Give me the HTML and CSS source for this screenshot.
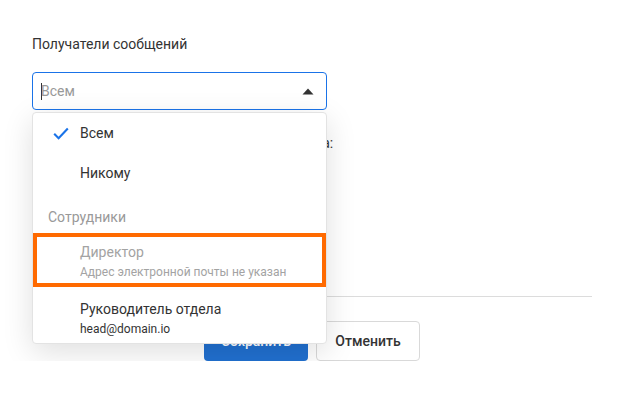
FILE: index.html
```html
<!DOCTYPE html>
<html lang="ru">
<head>
<meta charset="utf-8">
<title>Получатели сообщений</title>
<link rel="stylesheet" href="styles.css">
</head>
<body>
<div class="page">
  <div class="field-label">Получатели сообщений</div>
  <div class="select">
    <div class="select-input">
      <span class="caret"></span><span class="placeholder">Всем</span>
      <svg class="arrow" width="12" height="7" viewBox="0 0 12 7"><polygon points="0.5,6.5 6,0.5 11.5,6.5" fill="#333"/></svg>
    </div>
    <div class="dropdown">
      <div class="option selected">
        <svg class="check" width="16" height="13" viewBox="0 0 16 13"><polyline points="1.2,6.8 5.6,11.2 14.8,1.6" fill="none" stroke="#1a73e8" stroke-width="2.1"/></svg>
        <span class="option-title">Всем</span>
      </div>
      <div class="option"><span class="option-title">Никому</span></div>
      <div class="group">Сотрудники</div>
      <div class="option double disabled highlighted">
        <span class="option-title">Директор</span>
        <span class="option-sub">Адрес электронной почты не указан</span>
      </div>
      <div class="option double last">
        <span class="option-title">Руководитель отдела</span>
        <span class="option-sub">head@domain.io</span>
      </div>
    </div>
  </div>
  <div class="field-label second">Отправлять копии сообщений ещё на адреса:</div>
  <div class="divider"></div>
  <div class="actions">
    <button class="btn primary">Сохранить</button>
    <button class="btn secondary">Отменить</button>
  </div>
</div>
</body>
</html>
```
FILE: styles.css
```css
* { box-sizing: border-box; }
html, body { margin: 0; padding: 0; background: #fff; }
body {
  font-family: Roboto, "Noto Sans", Arial, sans-serif;
  font-size: 14px;
  line-height: 20px;
  color: #333;
}
.page { padding: 34px 32px 0 32px; }
.field-label { color: #333; }
.select { position: relative; width: 295px; margin-top: 18px; }
.select-input {
  height: 38px;
  border: 1px solid #1a73e8;
  border-radius: 4px;
  display: flex;
  align-items: center;
  padding: 0 12px 0 8px;
}
.placeholder { color: #999; flex: 1; }
.caret { width: 1px; height: 17px; background: #333; margin-right: -1px; }
.arrow { display: block; }
.dropdown {
  position: absolute;
  top: 40px; left: 0; right: 0;
  background: #fff;
  border: 1px solid #e3e3e3;
  border-radius: 4px;
  box-shadow: 0 8px 30px rgba(0,0,0,0.13);
  z-index: 5;
}
.option {
  position: relative;
  display: flex;
  flex-direction: column;
  justify-content: center;
  height: 40px;
  padding-left: 47px;
  color: #333;
}
.check { position: absolute; left: 20px; top: 14px; }
.group { height: 40px; padding: 14px 0 0 15px; color: #999; }
.option.double { justify-content: flex-start; height: 54px; padding-top: 9px; }
.option.last { height: 56px; padding-top: 12px; }
.option-sub { font-size: 12px; line-height: 16px; margin-top: 2px; }
.option.disabled .option-title, .option.disabled .option-sub { color: #a3a3a3; }
.highlighted { outline: 4px solid #ff6a00; outline-offset: -4px; }
.second { margin-top: 23px; white-space: nowrap; }
.divider { height: 1px; background: #dcdcdc; width: 560px; margin-top: 143px; }
.actions { display: flex; gap: 8px; margin-top: 24px; padding-left: 172px; }
.btn {
  width: 104px; height: 40px;
  border-radius: 4px;
  font-family: Roboto, "Noto Sans", Arial, sans-serif;
  font-size: 14px;
  font-weight: 500;
}
.primary { background: #2170d0; border: none; color: #fff; }
.secondary { background: #fff; border: 1px solid #d9d9d9; color: #333; }
```
